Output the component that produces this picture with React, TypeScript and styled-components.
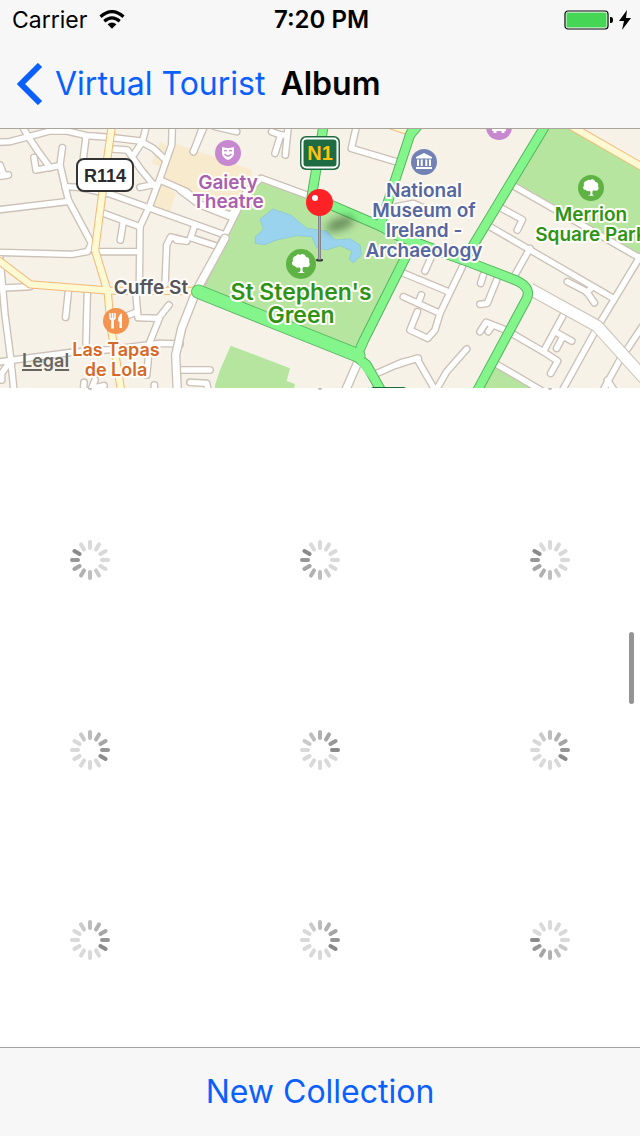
import React from "react";
import styled, { createGlobalStyle } from "styled-components";

const GlobalStyle = createGlobalStyle`
  * { box-sizing: border-box; }
  body {
    margin: 0;
    background: #fff;
    color: #000;
    font-family: Inter, "Liberation Sans", sans-serif;
  }
`;

const Screen = styled.div`
  display: flex;
  flex-direction: column;
  min-height: 100vh;
  overflow: hidden;
`;

const Header = styled.header`
  background: #f7f7f7;
  border-bottom: 1px solid #a9a59c;
`;

const StatusBar = styled.div`
  display: grid;
  grid-template-columns: 1fr auto 1fr;
  align-items: center;
  height: 40px;
  padding: 0 9px 0 12px;
  font-size: 23px;
  line-height: 40px;
`;

const StatusGroup = styled.div<{ $end?: boolean }>`
  display: flex;
  align-items: center;
  justify-content: ${(p) => (p.$end ? "flex-end" : "flex-start")};
  gap: ${(p) => (p.$end ? 5 : 12)}px;
`;

const Clock = styled.time`
  font-size: 24px;
  font-weight: 600;
`;

const NavBar = styled.nav`
  display: flex;
  align-items: center;
  gap: 15px;
  height: 88px;
  padding: 0 16px 0 17px;
`;

const BackButton = styled.button`
  display: flex;
  align-items: center;
  gap: 12px;
  padding: 0;
  border: 0;
  background: none;
  color: #0a60ff;
  font: inherit;
  font-size: 32px;
  line-height: 40px;
  white-space: nowrap;
`;

const Title = styled.h1`
  margin: 0;
  font-size: 32px;
  font-weight: 600;
  line-height: 40px;
`;

const MapArea = styled.section`
  position: relative;
  z-index: 1;
  overflow: hidden;
  background: #f6f2e8;
`;

const MapDrawing = styled.svg`
  display: block;
  width: 100%;
  height: auto;
`;

const PlaceName = styled.text<{ $size?: number }>`
  font-size: ${(p) => p.$size ?? 19}px;
  font-weight: 600;
  text-anchor: middle;
  paint-order: stroke;
  stroke: #fffdf8;
  stroke-width: 4px;
  stroke-linejoin: round;
`;

const ShieldText = styled.text<{ $size: number }>`
  font-family: "Liberation Sans", Arial, sans-serif;
  font-size: ${(p) => p.$size}px;
  font-weight: 700;
  text-anchor: middle;
`;

const LegalLink = styled.a`
  position: absolute;
  left: 22px;
  bottom: 16px;
  color: #68675f;
  font-size: 18px;
  font-weight: 600;
  line-height: 22px;
  text-decoration: underline;
  text-decoration-thickness: 2px;
  text-underline-offset: 2px;
`;

const Gallery = styled.main`
  position: relative;
  flex: 1;
  height: 0;
  overflow: hidden;
`;

const PhotoGrid = styled.div`
  display: grid;
  grid-template-columns: repeat(3, 180px);
  grid-auto-rows: 180px;
  justify-content: space-between;
  row-gap: 10px;
  margin-top: -108px;
`;

const PhotoCell = styled.div`
  display: grid;
  place-items: center;
`;

const ScrollThumb = styled.div`
  position: absolute;
  top: 244px;
  right: 6px;
  width: 5px;
  height: 72px;
  border-radius: 3px;
  background: #949494;
`;

const Toolbar = styled.footer`
  display: flex;
  align-items: center;
  justify-content: center;
  height: 89px;
  border-top: 1px solid #a2a2a2;
  background: #f7f7f7;
`;

const ToolbarButton = styled.button`
  padding: 0;
  border: 0;
  background: none;
  color: #0a60ff;
  font: inherit;
  font-size: 32px;
  line-height: 40px;
`;

const SHADES = ["#8a8a8a", "#979797", "#a5a5a5", "#b1b1b1", "#bdbdbd", "#cacaca"];

function Spinner({ lead }: { lead: number }) {
  return (
    <svg width="40" height="40" viewBox="-20 -20 40 40" role="img" aria-label="Loading photo">
      {Array.from({ length: 12 }, (_, i) => (
        <line
          key={i}
          y1="-18"
          y2="-12"
          stroke={SHADES[(lead - i + 12) % 12] ?? "#d9d9d9"}
          strokeWidth="4"
          strokeLinecap="round"
          transform={`rotate(${i * 30})`}
        />
      ))}
    </svg>
  );
}

/* Street data: three tiles, each drawn at three units to the pixel. */
type Tile = {
  x: number;
  streets: string[];
  wide: string[];
  yellow: string[];
  green: string[];
  broadGreen: string[];
};

const TILES: Tile[] = [
  {
    x: 0,
    streets: [
      "M-10 52L30 50L75 38L150 18L200 18L260 32L330 37L420 48L460 70L495 103",
      "M65 0L85 35L115 80L150 128",
      "M187 68L180 120L205 225L272 350",
      "M102 97L108 135L180 122",
      "M-10 155L25 150M0 120L12 150",
      "M195 185L235 187L330 207L450 250L675 330",
      "M-10 255L200 230",
      "M-10 382L215 388L262 380L275 355",
      "M310 265L420 305",
      "M370 290L361 345",
      "M517 0L515 60L480 160L450 240L420 305L418 480",
      "M340 72L382 75L420 130L465 185",
      "M420 187L465 178",
      "M440 0L427 50L402 88",
      "M258 35L250 100",
      "M610 0L581 80",
      "M285 380L415 380",
      "M495 480L500 360L512 336L560 348",
      "M480 165L560 200L600 237L690 270",
      "M583 305L572 338L655 365",
      "M-10 490L90 485",
      "M0 400L15 570L32 700L42 800",
      "M205 500L197 577",
      "M262 500L258 655",
      "M-10 712L40 705L215 682L330 674L480 655L540 657",
      "M408 510L414 578L475 580L507 540",
      "M478 580L450 650L440 750",
      "M412 560L370 577",
      "M30 710L5 745L5 765",
      "M540 735L630 735",
      "M570 772L620 775L625 800",
      "M250 800L252 772M285 765L275 790L312 782M463 800L463 780",
    ],
    wide: ["M675 340L590 495L545 610L527 690L532 800"],
    yellow: ["M336 0L305 220L285 375L323 500L333 610L364 800", "M-10 402L90 478L330 497L610 498"],
    green: [],
    broadGreen: [],
  },
  {
    x: 180,
    streets: [
      "M75 0L40 80M105 5L170 20",
      "M325 0L316 90M275 20L302 30L285 85M300 29L322 31",
      "M530 0L514 70L655 112",
      "M0 195L60 240L150 275L200 200L243 160L395 215",
      "M200 200L130 340L65 480",
      "M-10 345L20 348",
      "M580 750L665 712L715 700",
    ],
    wide: ["M532 715L495 800"],
    yellow: ["M630 0L695 22"],
    green: [
      "M431 0L395 215L600 303L660 335L850 405",
      "M715 0L690 30L600 303",
      "M700 350L552 645L530 695L560 720L605 800",
    ],
    broadGreen: ["M55 500L300 598L535 692"],
  },
  {
    x: 400,
    streets: [
      "M345 185L730 405",
      "M305 250L367 284L352 315",
      "M270 305L640 520",
      "M390 370L342 455",
      "M502 470L560 500L583 533M560 503L577 486",
      "M720 395L590 610",
      "M585 620L485 800",
      "M730 600L670 690M662 700L607 800M622 765L645 800",
      "M490 570L430 680M465 620L515 648M488 635L470 670",
      "M335 625L430 680L473 708L452 745",
      "M330 620L258 592L240 620M278 600L265 620",
      "M250 450L242 475M290 465L262 535L240 538",
      "M187 425L120 565L105 615L83 640L30 615L52 560",
      "M10 515L120 565M64 510L54 535",
      "M0 440L145 500M92 400L75 438",
      "M-10 720L50 700L108 800M110 792L140 740L200 672",
      "M285 715L430 800",
      "M-10 245L40 235L75 250",
    ],
    wide: [],
    yellow: ["M490 -10L730 128"],
    green: ["M45 0L30 30", "M437 0L205 385", "M0 335L190 405L350 467Q398 490 378 525L225 810"],
    broadGreen: [],
  },
];

type RoadKind = "streets" | "wide" | "yellow" | "green" | "broadGreen";

type RoadsProps = { kind: RoadKind; color: string; casing: string; width: number; edge?: number };

function Roads({ kind, color, casing, width, edge = 7 }: RoadsProps) {
  return (
    <g fill="none" strokeLinecap="round" strokeLinejoin="round">
      {[true, false].map((outer) => (
        <g key={String(outer)} stroke={outer ? casing : color} strokeWidth={outer ? width + edge : width}>
          {TILES.map((tile) => (
            <g key={tile.x} transform={`translate(${tile.x} 125) scale(${1 / 3})`}>
              {tile[kind].map((d) => (
                <path key={d} d={d} />
              ))}
            </g>
          ))}
        </g>
      ))}
    </g>
  );
}

function Tree({ x, y, r }: { x: number; y: number; r: number }) {
  return (
    <g transform={`translate(${x} ${y}) scale(${r / 15})`}>
      <circle r="15" fill="#5fb345" />
      <path
        fill="#fff"
        d="M-1-9C1-11 4-10 5-7C8-7 9-4 8-2C10 0 8 4 5 3L2 3Q1 6 2 8L4 9H-4L-1 8Q0 5-1 3C-3 4-5 4-6 2C-9 2-10-1-8-3C-9-6-7-8-5-8C-4-10-2-10-1-9Z"
      />
      <path d="M-3 1L0 4L3 1" fill="none" stroke="#fff" strokeWidth="1.2" />
    </g>
  );
}

function CityMap() {
  return (
    <MapDrawing viewBox="0 129 640 259" aria-label="Map of St Stephen's Green">
      <defs>
        <filter id="soft" x="-50%" y="-100%" width="200%" height="300%">
          <feGaussianBlur stdDeviation="4" />
        </filter>
      </defs>
      <rect y="129" width="640" height="259" fill="#f6f2e8" />
      <g transform={`translate(180 125) scale(${1 / 3})`}>
        <path fill="#f8ebcd" d="M-15 55L215 135V165L190 215L150 260L60 220L0 190L-60 160L-10 35Z" />
        <path fill="#f8ebcd" d="M-60 50L-10 80L-30 137L-85 115Z" />
        <path fill="#f8ebcd" d="M-60 175L-12 205L-30 262L-85 240Z" />
        <path fill="#b6e5a0" d="M200 205L245 165L395 220L700 335L690 390L540 665L500 668L60 485Z" />
        <path fill="#b6e5a0" d="M152 662L330 730L320 768L345 777L340 800H105L105 780L120 735Z" />
        <path
          fill="#9ad3ee"
          stroke="#86c4d5"
          strokeWidth="2"
          d="M240 283L278 252L332 270L380 310L440 318L466 345L510 341L540 360L545 390L520 413L508 404L515 378L480 362L440 375L410 368L395 335L350 332L290 345L255 359L225 355L226 336L250 312Z"
        />
      </g>
      <g transform={`translate(400 125) scale(${1 / 3})`} fill="#b6e5a0">
        <path d="M440 0H490L730 140V392L345 185Z" />
        <path d="M285 722L400 795H240Z" />
      </g>

      <Roads kind="streets" color="#fff" casing="#cbc1b7" width={16} edge={8} />
      <Roads kind="wide" color="#fff" casing="#cbc1b7" width={21} edge={8} />
      <path d="M530 289L597 326L645 379" fill="none" stroke="#cdc3b8" strokeWidth="13" />
      <path d="M530 289L597 326L645 379" fill="none" stroke="#fff" strokeWidth="11" />
      <Roads kind="yellow" color="#fdf9d2" casing="#f4b878" width={19} edge={6} />
      <Roads kind="green" color="#83f58a" casing="#55b560" width={25} edge={6} />
      <Roads kind="broadGreen" color="#83f58a" casing="#55b560" width={38} edge={5} />
      <path d="M200 292L357 356L372 375M357 356L365 338" fill="none" stroke="#83f58a" strokeWidth="8" />
      <path d="M371 388L373 387H404L406 388Z" fill="#1d6b3a" />

      <rect x="77" y="159" width="56" height="32" rx="7" fill="#fff" stroke="#333" strokeWidth="2" />
      <ShieldText $size={18} x="105" y="182" fill="#2b2b2b">R114</ShieldText>
      <rect x="300" y="136" width="40" height="34" rx="6" fill="#1f6c43" />
      <rect x="302.500" y="138.500" width="35" height="29" rx="4" fill="none" stroke="#fff" strokeWidth="2" />
      <ShieldText $size={20} x="320" y="160" fill="#ffc20e">N1</ShieldText>

      <circle cx="228" cy="153" r="13" fill="#c688cf" />
      <path fill="#fff" d="M222 147Q228 149 234 147V154Q233 158 228 160Q223 158 222 154Z" />
      <path d="M224 151Q225.500 150 227 151M229 151Q230.500 150 232 151M224.500 154Q228 158 231.500 154" fill="none" stroke="#c688cf" strokeWidth="1.300" />

      <circle cx="499" cy="127" r="13" fill="#c688cf" />
      <path d="M492 129.500H506M495 133V131M503 133V131" stroke="#fff" strokeWidth="3" />

      <circle cx="424" cy="162" r="13" fill="#7382b5" />
      <path fill="#fff" d="M416 157L424 153L432 157V158.500H416ZM417 159.500H419V166H417ZM420.700 159.500H422.700V166H420.700ZM425.300 159.500H427.300V166H425.300ZM429 159.500H431V166H429ZM416 167H432V169H416Z" />

      <circle cx="116" cy="321" r="13" fill="#f3934f" />
      <path d="M110 313V317Q110 319.500 112.500 319.500Q115 319.500 115 317V313M112.500 313V328" fill="none" stroke="#fff" strokeWidth="1.600" />
      <path d="M112.500 319V328.500" stroke="#fff" strokeWidth="2.500" />
      <path d="M122 313V328H119.500V322L118 321Q118 315 122 313Z" fill="#fff" />

      <Tree x={301} y={264} r={15} />
      <Tree x={591} y={188} r={13} />

      <g fill="#a95fb0">
        <PlaceName x="228" y="189">Gaiety</PlaceName>
        <PlaceName x="228" y="208">Theatre</PlaceName>
      </g>
      <g fill="#5566a0">
        <PlaceName x="424" y="197">National</PlaceName>
        <PlaceName x="424" y="217">Museum of</PlaceName>
        <PlaceName x="424" y="237">Ireland -</PlaceName>
        <PlaceName x="424" y="257">Archaeology</PlaceName>
      </g>
      <g fill="#2f9416">
        <PlaceName x="591" y="221">Merrion</PlaceName>
        <PlaceName x="591" y="241">Square Park</PlaceName>
        <PlaceName $size={23} x="301" y="300">St Stephen's</PlaceName>
        <PlaceName $size={23} x="301" y="323">Green</PlaceName>
      </g>
      <PlaceName x="151" y="294" fill="#55555a">Cuffe St</PlaceName>
      <g fill="#d5692a">
        <PlaceName $size={18} x="116" y="356">Las Tapas</PlaceName>
        <PlaceName $size={18} x="116" y="376">de Lola</PlaceName>
      </g>

      <ellipse cx="340" cy="224" rx="15" ry="6" fill="#33502a" opacity="0.6" filter="url(#soft)" transform="rotate(-20 340 224)" />
      <ellipse cx="319.500" cy="260" rx="3.500" ry="1.500" fill="#333" />
      <path d="M319.500 215V260" stroke="#77777c" strokeWidth="3" />
      <path d="M319.500 215V259" stroke="#aaaab0" strokeWidth="1.500" />
      <circle cx="319.500" cy="202.500" r="13.500" fill="#ff2226" />
      <circle cx="315" cy="198" r="3" fill="#fff" />
    </MapDrawing>
  );
}

function WifiIcon() {
  return (
    <svg width="26" height="20" viewBox="0 0 26 20" aria-label="Wi-Fi">
      <path d="M1.500 6.800Q13-3.600 24.500 6.800" fill="none" stroke="#000" strokeWidth="3.200" />
      <path d="M5.300 11.200Q13 4.600 20.700 11.200" fill="none" stroke="#000" strokeWidth="3.200" />
      <path d="M8.600 14.200Q13 10.600 17.400 14.200L13 18.800Z" />
    </svg>
  );
}

function BatteryIcon() {
  return (
    <svg width="50" height="20" viewBox="0 0 50 20" aria-label="Battery full">
      <rect x="1" y="1" width="43" height="18" rx="3" fill="#fff" stroke="#000" strokeWidth="1.200" />
      <rect x="2.500" y="2.500" width="40" height="15" rx="1" fill="#45d655" />
      <path d="M46 7H47Q49 7 49 10Q49 13 47 13H46Z" />
    </svg>
  );
}

function BoltIcon() {
  return (
    <svg width="12" height="20" viewBox="0 0 12 20" aria-label="Charging">
      <path d="M8 0L0 11H5L3 20L12 8H7Z" />
    </svg>
  );
}

const LEADS = [10, 10, 10, 10, 10, 10, 4, 3, 4, 4, 4, 9];

export default function App() {
  return (
    <Screen>
      <GlobalStyle />
      <Header>
        <StatusBar>
          <StatusGroup>
            <span>Carrier</span>
            <WifiIcon />
          </StatusGroup>
          <Clock>7:20 PM</Clock>
          <StatusGroup $end>
            <BatteryIcon />
            <BoltIcon />
          </StatusGroup>
        </StatusBar>
        <NavBar>
          <BackButton type="button">
            <svg width="26" height="42" viewBox="0 0 26 42" aria-hidden="true">
              <path d="M23 2L4 21L23 40" fill="none" stroke="currentColor" strokeWidth="6" />
            </svg>
            Virtual Tourist
          </BackButton>
          <Title>Album</Title>
        </NavBar>
      </Header>
      <MapArea>
        <CityMap />
        <LegalLink href="#legal">Legal</LegalLink>
      </MapArea>
      <Gallery>
        <PhotoGrid>
          {LEADS.map((lead, i) => (
            <PhotoCell key={i}>
              <Spinner lead={lead} />
            </PhotoCell>
          ))}
        </PhotoGrid>
        <ScrollThumb />
      </Gallery>
      <Toolbar>
        <ToolbarButton type="button">New Collection</ToolbarButton>
      </Toolbar>
    </Screen>
  );
}
